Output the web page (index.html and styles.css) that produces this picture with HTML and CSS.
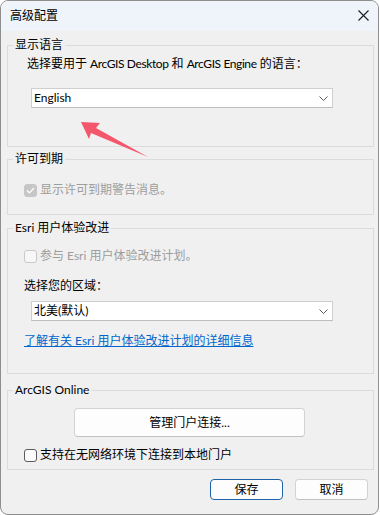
FILE: index.html
```html
<!DOCTYPE html>
<html lang="zh-CN">
<head>
<meta charset="utf-8">
<link rel="stylesheet" href="styles.css">
</head>
<body>
<div class="window">
  <div class="titlebar">
    <span class="title">高级配置</span>
    <svg class="close" width="11" height="11" viewBox="0 0 11 11"><path d="M0.5 0.5L10.5 10.5M10.5 0.5L0.5 10.5" stroke="#1b1b1b" stroke-width="1.1" fill="none"/></svg>
  </div>
  <div class="content">
    <fieldset class="group g1">
      <legend>显示语言</legend>
      <div class="label indent">选择要用于 <span class="latin">ArcGIS Desktop</span> 和 <span class="latin">ArcGIS Engine</span> 的语言：</div>
      <div class="select s1"><span>English</span><svg class="chev" width="9" height="5" viewBox="0 0 9 5"><path d="M0.5 0.5L4.5 4.5L8.5 0.5" stroke="#5a5a5a" fill="none"/></svg></div>
    </fieldset>
    <fieldset class="group g2">
      <legend>许可到期</legend>
      <div class="check disabled"><span class="box checked"><svg width="9" height="7" viewBox="0 0 9 7"><path d="M1 3.5L3.5 6L8 1" stroke="#fff" stroke-width="1.2" fill="none"/></svg></span><span>显示许可到期警告消息。</span></div>
    </fieldset>
    <fieldset class="group g3">
      <legend>Esri 用户体验改进</legend>
      <div class="check disabled"><span class="box light"></span><span>参与 Esri 用户体验改进计划。</span></div>
      <div class="label region">选择您的区域：</div>
      <div class="select s2"><span>北美(默认)</span><svg class="chev" width="9" height="5" viewBox="0 0 9 5"><path d="M0.5 0.5L4.5 4.5L8.5 0.5" stroke="#5a5a5a" fill="none"/></svg></div>
      <a class="link">了解有关 Esri 用户体验改进计划的详细信息</a>
    </fieldset>
    <fieldset class="group g4">
      <legend>ArcGIS Online</legend>
      <div class="btn manage">管理门户连接...</div>
      <div class="check c3"><span class="box"></span><span>支持在无网络环境下连接到本地门户</span></div>
    </fieldset>
    <div class="footer">
      <div class="btn small primary">保存</div>
      <div class="btn small">取消</div>
    </div>
  </div>
</div>
<svg class="arrow" width="380" height="515" viewBox="0 0 380 515"><polygon points="81,122 100,123 96,128 148,157 91,133 89,139" fill="#f4566b"/></svg>
</body>
</html>
```
FILE: styles.css
```css
html, body {
  margin: 0;
  padding: 0;
  background: #ffffff;
}
body {
  position: relative;
  width: 380px;
  height: 515px;
  overflow: hidden;
  font-family: "Lato", "Noto Sans CJK SC", sans-serif;
  font-size: 12px;
  color: #000;
}
.window {
  width: 379px;
  height: 515px;
  box-sizing: border-box;
  border: 1px solid #8e8e8e;
  border-radius: 8px;
  overflow: hidden;
  background: #f0f0f0;
}
.titlebar {
  height: 30px;
  background: #eef4f9;
  display: flex;
  align-items: center;
  justify-content: space-between;
  padding: 0 8px 0 9px;
}
.title {
  line-height: 16px;
  margin-top: -1px;
}
.close {
  margin-right: 1px;
  margin-top: -1px;
}
.content {
  padding-top: 6px;
}
.group {
  margin: 0 0 0 6px;
  padding: 0;
  width: 367px;
  box-sizing: border-box;
  border: 1px solid #dcdcdc;
  min-width: 0;
}
.group legend {
  margin-left: 5px;
  padding: 0 2px;
  line-height: 16px;
}
.label {
  line-height: 16px;
}
.indent {
  margin: 3px 0 0 19px;
  white-space: nowrap;
}
.latin {
  letter-spacing: -0.4px;
}
.select {
  height: 20px;
  width: 302px;
  box-sizing: border-box;
  background: #ffffff;
  border: 1px solid #cfcfcf;
  border-bottom-color: #bdbdbd;
  display: flex;
  align-items: center;
  justify-content: space-between;
  padding: 0 4px 0 2px;
  margin-left: 23px;
  line-height: 16px;
}
.s1 {
  margin-top: 16px;
  margin-bottom: 38px;
}
.g2 {
  margin-top: 4px;
}
.check {
  display: flex;
  align-items: center;
  line-height: 16px;
  margin-left: 16px;
  gap: 3px;
}
.g2 .check {
  margin-top: 15px;
  margin-bottom: 16px;
}
.disabled {
  color: #9d9d9d;
}
.box {
  width: 13px;
  height: 13px;
  box-sizing: border-box;
  border: 1px solid #5c5c5c;
  border-radius: 3px;
  background: #fbfbfb;
  display: flex;
  align-items: center;
  justify-content: center;
}
.box.checked {
  background: #c6c6c6;
  border-color: #c6c6c6;
}
.box.light {
  border-color: #c9c9c9;
  background: #f7f7f7;
}
.g3 {
  margin-top: 5px;
}
.g3 .check {
  margin-top: 12px;
}
.region {
  margin: 14px 0 0 16px;
}
.s2 {
  margin-top: 7px;
}
.link {
  display: block;
  margin: 12px 0 24px 16px;
  line-height: 16px;
  color: #0066cc;
  text-decoration: underline;
  width: max-content;
}
.g4 {
  margin-top: 8px;
}
.btn {
  box-sizing: border-box;
  background: #fdfdfd;
  border: 1px solid #d3d3d3;
  border-bottom-color: #c2c2c2;
  border-radius: 4px;
  display: flex;
  align-items: center;
  justify-content: center;
  line-height: 16px;
}
.manage {
  width: 231px;
  height: 29px;
  margin: 10px 0 0 66px;
}
.g4 .check {
  margin-top: 10px;
  margin-bottom: 6px;
}
.footer {
  display: flex;
  justify-content: flex-end;
  gap: 12px;
  margin: 9px 10px 0 0;
}
.small {
  width: 73px;
  height: 21px;
}
.primary {
  border-color: #1f62a8;
}
.arrow {
  position: absolute;
  left: 0;
  top: 0;
  pointer-events: none;
}
```
